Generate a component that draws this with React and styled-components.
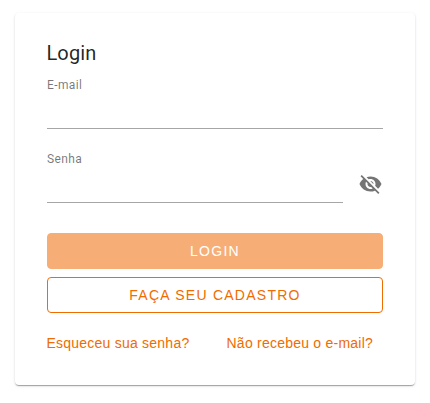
import React from "react";
import styled, { createGlobalStyle } from "styled-components";

const GlobalStyle = createGlobalStyle`
  * { box-sizing: border-box; }
  body { margin: 0; background: #fff; font-family: Roboto, sans-serif; overflow: hidden; }
`;

const Page = styled.main`
  height: 403px;
  padding: 13px 15px 0;
`;

const Card = styled.form`
  width: 400px;
  height: 372px;
  padding: 24px 32px;
  background: #fff;
  border-radius: 4px;
  box-shadow: 0 2px 1px -1px rgba(0, 0, 0, 0.2), 0 1px 1px rgba(0, 0, 0, 0.14), 0 1px 3px rgba(0, 0, 0, 0.12);
`;

const Title = styled.h1`
  margin: 0 0 0 -0.5px;
  font-size: 20px;
  font-weight: 400;
  line-height: 32px;
  letter-spacing: 0.1px;
  color: rgba(0, 0, 0, 0.87);
`;

const Row = styled.div`
  display: flex;
  gap: 16px;
  height: 60px;
  margin-bottom: ${(p) => p.$gap}px;
`;

const Field = styled.label`
  flex: 1;
  padding-top: 8px;
  border-bottom: 1px solid #a6a6a6;
  font-size: 12px;
  line-height: 16px;
  letter-spacing: 0.38px;
  color: rgba(0, 0, 0, 0.54);
`;

const EyeOff = styled.svg`
  width: 24px;
  height: 24px;
  margin-top: 29px;
  fill: #757575;
`;

const Button = styled.button`
  display: block;
  width: 100%;
  height: 36px;
  margin: 0 0 8px;
  padding: 0;
  border: 1px solid ${(p) => (p.$filled ? "#f6ae76" : "#ef6c00")};
  border-radius: 4px;
  background: ${(p) => (p.$filled ? "#f6ae76" : "#fff")};
  color: ${(p) => (p.$filled ? "#fff" : "#ef6c00")};
  font-family: "Liberation Sans", Arial, sans-serif;
  font-size: 14px;
  letter-spacing: 1.25px;
`;

const Links = styled.nav`
  display: flex;
  justify-content: space-between;
  padding: 13px 10px 0 0;
`;

const Link = styled.a`
  margin-left: -0.5px;
  font-family: "Liberation Sans", Arial, sans-serif;
  font-size: 14px;
  line-height: 18px;
  letter-spacing: 0.23px;
  color: #ef6c00;
`;

export default function App() {
  return (
    <Page>
      <GlobalStyle />
      <Card>
        <Title>Login</Title>
        <Row $gap={14}>
          <Field>E-mail</Field>
        </Row>
        <Row $gap={30}>
          <Field>Senha</Field>
          <EyeOff viewBox="0.5 0 24 24">
            <path d="M12 7c2.76 0 5 2.24 5 5 0 .65-.13 1.26-.36 1.83l2.92 2.92c1.51-1.26 2.7-2.89 3.43-4.75-1.73-4.39-6-7.5-11-7.5-1.4 0-2.74.25-3.98.7l2.16 2.16C10.74 7.13 11.35 7 12 7zM2 4.27l2.28 2.28.46.46C3.08 8.3 1.78 10.02 1 12c1.73 4.39 6 7.5 11 7.5 1.55 0 3.03-.3 4.38-.84l.42.42L19.73 22 21 20.73 3.27 3 2 4.27zM7.53 9.8l1.55 1.55c-.05.21-.08.43-.08.65 0 1.66 1.34 3 3 3 .22 0 .44-.03.65-.08l1.55 1.55c-.67.33-1.41.53-2.2.53-2.76 0-5-2.24-5-5 0-.79.2-1.53.53-2.2zm4.31-.78l3.15 3.15.02-.16c0-1.66-1.34-3-3-3l-.17.01z" />
          </EyeOff>
        </Row>
        <Button type="button" $filled>LOGIN</Button>
        <Button type="button">FAÇA SEU CADASTRO</Button>
        <Links>
          <Link>Esqueceu sua senha?</Link>
          <Link>Não recebeu o e-mail?</Link>
        </Links>
      </Card>
    </Page>
  );
}
